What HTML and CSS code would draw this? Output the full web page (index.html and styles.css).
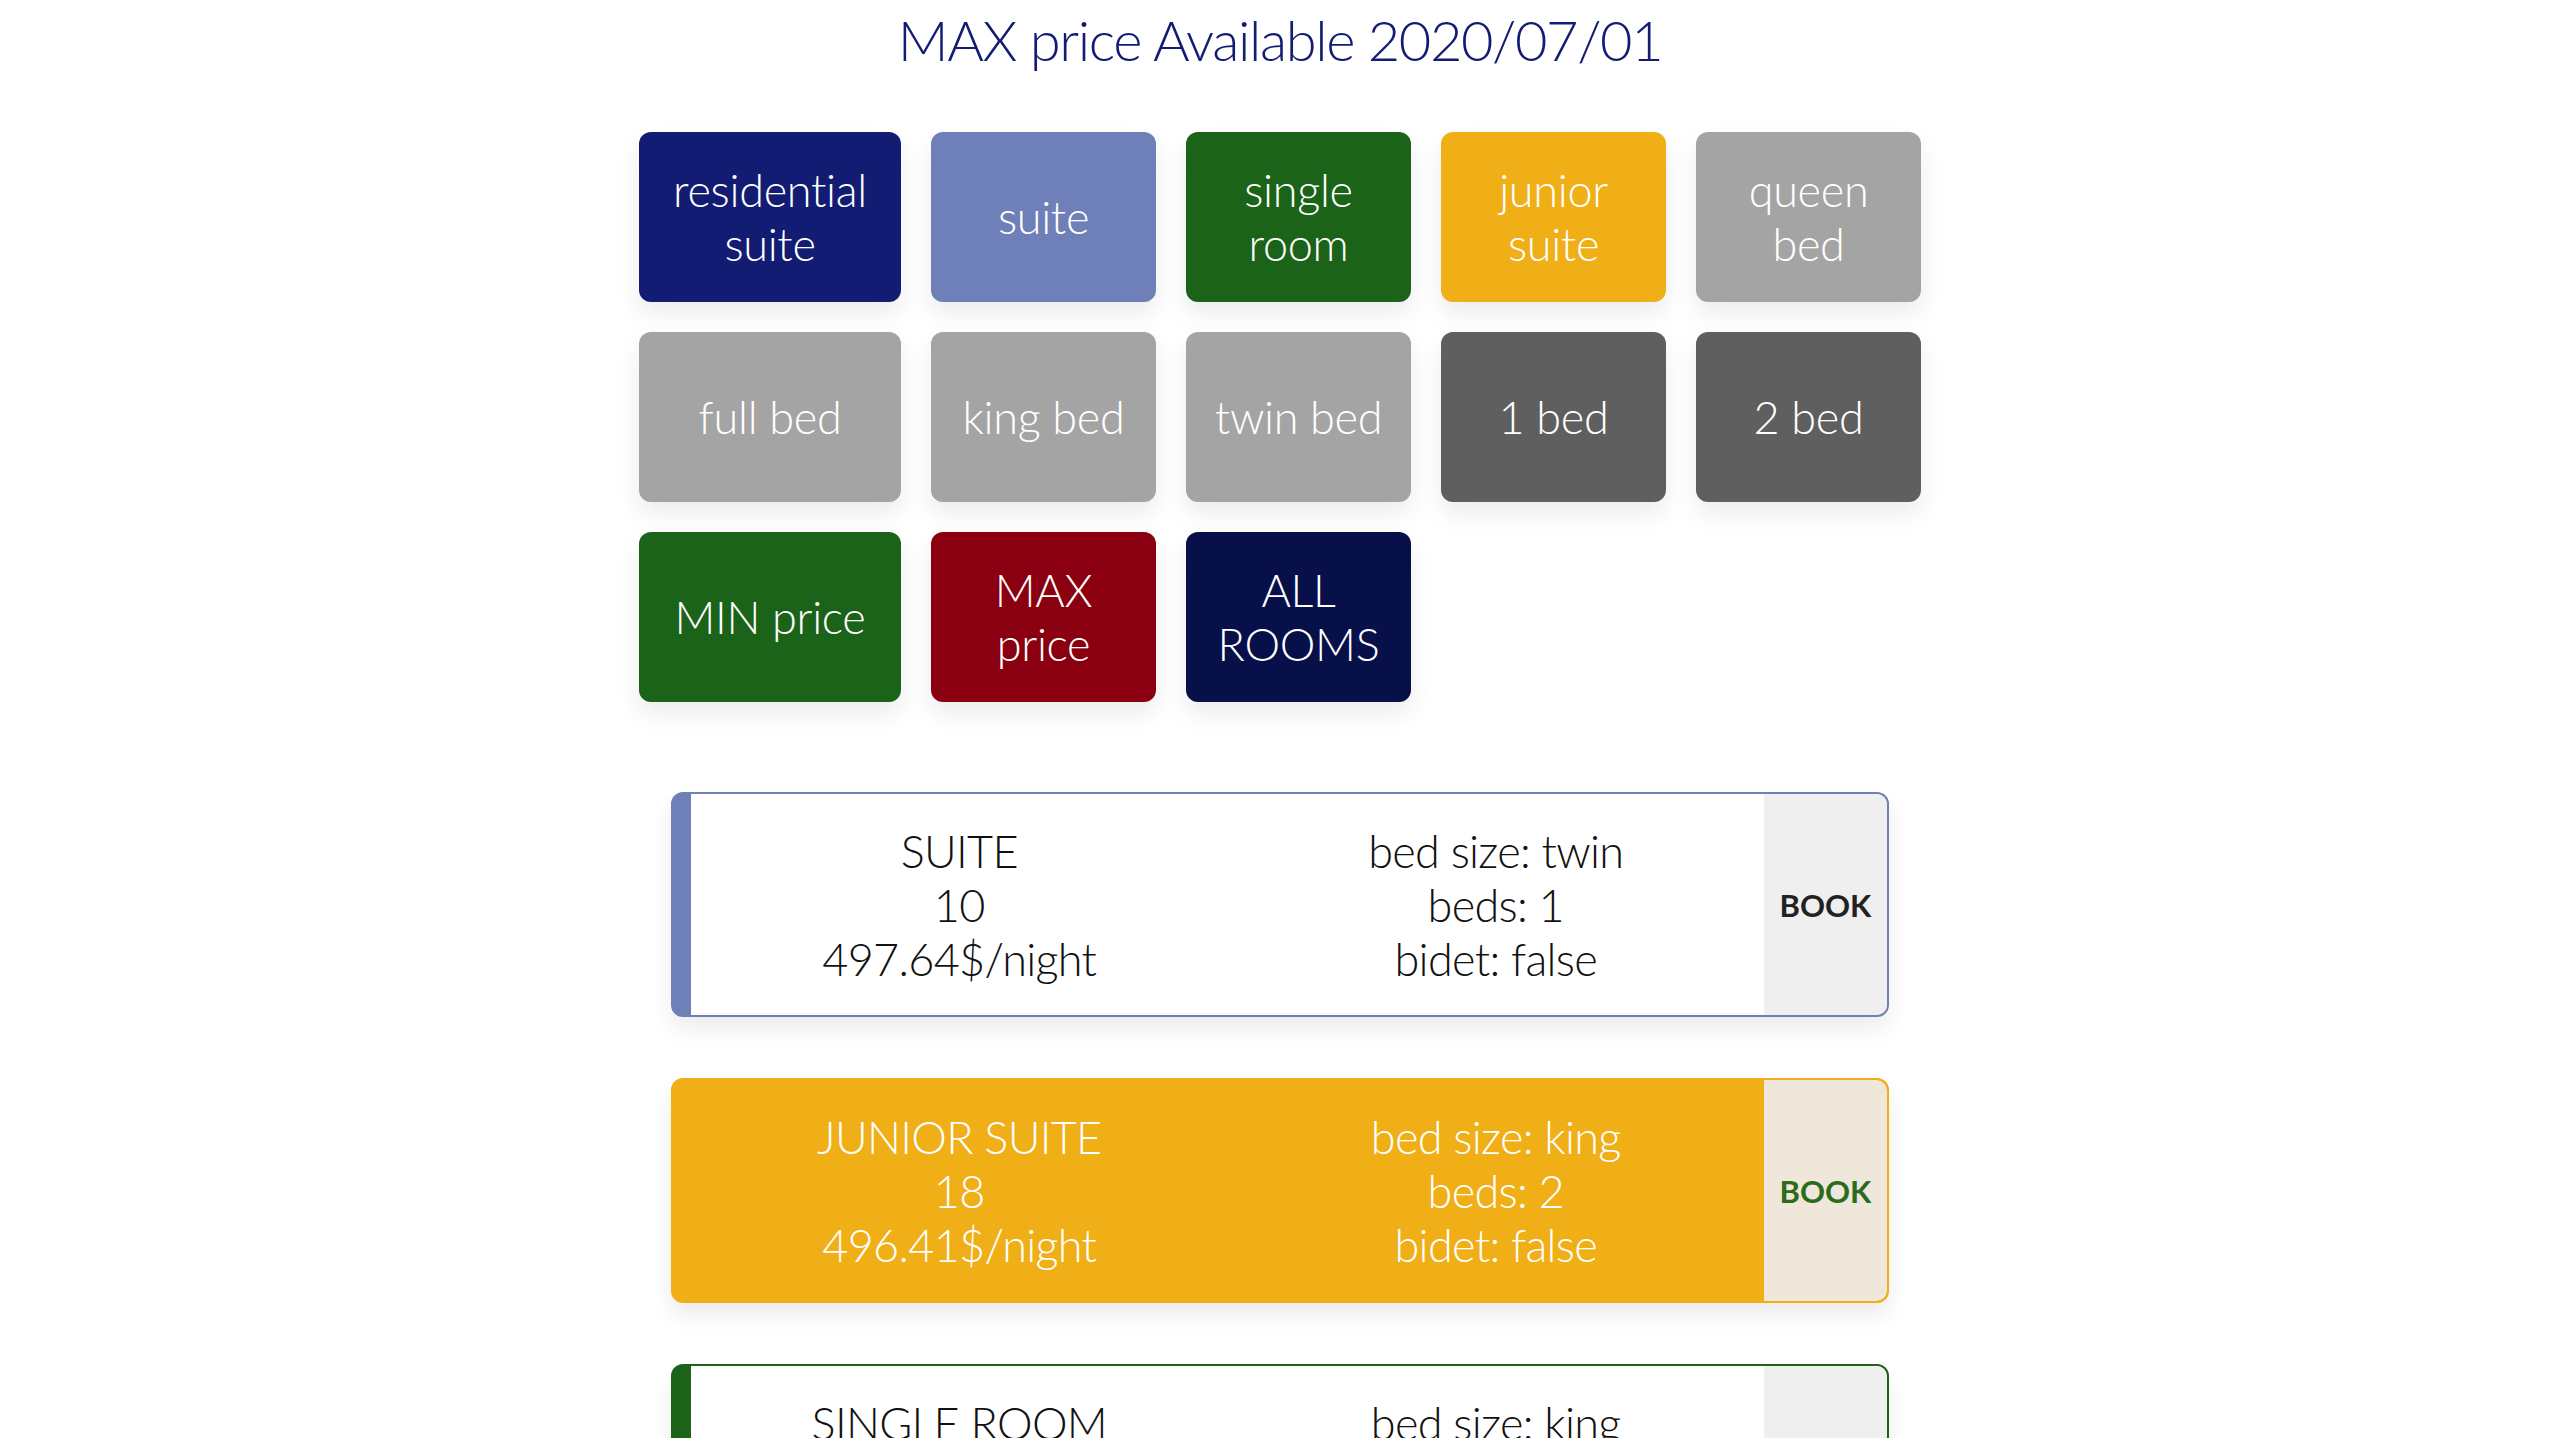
FILE: index.html
```html
<!DOCTYPE html>
<html lang="en">
<head>
<meta charset="utf-8">
<title>MAX price Available</title>
<link rel="stylesheet" href="styles.css">
</head>
<body>
<main class="page">
  <h1 class="title">MAX price Available 2020/07/01</h1>

  <div class="filters">
    <button class="filter c-residential">residential<br>suite</button>
    <button class="filter c-suite">suite</button>
    <button class="filter c-single">single<br>room</button>
    <button class="filter c-junior">junior<br>suite</button>
    <button class="filter c-light">queen<br>bed</button>

    <button class="filter c-light">full bed</button>
    <button class="filter c-light">king bed</button>
    <button class="filter c-light">twin bed</button>
    <button class="filter c-dark">1 bed</button>
    <button class="filter c-dark">2 bed</button>

    <button class="filter c-min">MIN price</button>
    <button class="filter c-max">MAX price</button>
    <button class="filter c-all">ALL<br>ROOMS</button>
  </div>

  <section class="rooms">
    <article class="room room-suite">
      <div class="room-col">
        <div>SUITE</div>
        <div>10</div>
        <div>497.64$/night</div>
      </div>
      <div class="room-col">
        <div>bed size: twin</div>
        <div>beds: 1</div>
        <div>bidet: false</div>
      </div>
      <button class="book">BOOK</button>
    </article>

    <article class="room room-junior">
      <div class="room-col">
        <div>JUNIOR SUITE</div>
        <div>18</div>
        <div>496.41$/night</div>
      </div>
      <div class="room-col">
        <div>bed size: king</div>
        <div>beds: 2</div>
        <div>bidet: false</div>
      </div>
      <button class="book">BOOK</button>
    </article>

    <article class="room room-single">
      <div class="room-col">
        <div>SINGLE ROOM</div>
        <div>4</div>
        <div>495.87$/night</div>
      </div>
      <div class="room-col">
        <div>bed size: king</div>
        <div>beds: 1</div>
        <div>bidet: true</div>
      </div>
      <button class="book">BOOK</button>
    </article>
  </section>
</main>
</body>
</html>
```

FILE: styles.css
```css
html, body {
  margin: 0;
  padding: 0;
  background: #ffffff;
}

body {
  font-family: Lato, "Open Sans", "Liberation Sans", sans-serif;
  font-weight: 300;
}

.page {
  display: flex;
  flex-direction: column;
  align-items: center;
}

.title {
  margin: 0;
  padding-top: 6px;
  font-size: 56px;
  line-height: 67px;
  font-weight: 300;
  letter-spacing: -1.4px;
  color: #121c72;
  text-align: center;
}

.filters {
  margin-top: 59px;
  display: grid;
  grid-template-columns: 262px repeat(4, 225px);
  grid-auto-rows: 170px;
  gap: 30px;
  justify-content: center;
}

.filter {
  border: none;
  margin: 0;
  padding: 0 20px;
  border-radius: 12px;
  font-family: inherit;
  font-weight: 300;
  font-size: 45px;
  line-height: 54px;
  letter-spacing: -0.3px;
  color: #ffffff;
  text-align: center;
  box-shadow: 0 12px 24px rgba(0, 0, 0, 0.08);
  cursor: pointer;
}

.c-residential { background: #121c72; }
.c-suite { background: #6f7fb8; }
.c-single { background: #1b6319; }
.c-junior { background: #f0ae17; }
.c-light { background: #a4a4a4; }
.c-dark { background: #5f5f5f; }
.c-min { background: #1b6319; }
.c-max { background: #8a0010; }
.c-all { background: #08104a; }

.rooms {
  margin-top: 90px;
  display: flex;
  flex-direction: column;
  gap: 61px;
}

.room {
  width: 1218px;
  height: 225px;
  box-sizing: border-box;
  display: flex;
  border: 2px solid;
  border-left-width: 20px;
  border-radius: 12px;
  box-shadow: 0 12px 22px rgba(0, 0, 0, 0.08);
  overflow: hidden;
}

.room-col {
  flex: 1;
  display: flex;
  flex-direction: column;
  justify-content: center;
  align-items: center;
  font-size: 45px;
  line-height: 54px;
  letter-spacing: -0.7px;
}

.book {
  width: 123px;
  flex: none;
  border: none;
  margin: 0;
  padding: 0;
  border-radius: 0 10px 10px 0;
  font-family: inherit;
  font-weight: 700;
  font-size: 31px;
  cursor: pointer;
}

.room-suite {
  border-color: #6f7fb8;
  background: #ffffff;
  color: #111111;
}
.room-suite .book { background: #efefef; color: #222222; }

.room-junior {
  border-color: #f0ae17;
  background: #f0ae17;
  color: #ffffff;
}
.room-junior .book { background: #efe7d9; color: #2b6b1c; }

.room-single {
  border-color: #1b6319;
  background: #ffffff;
  color: #111111;
}
.room-single .book { background: #efefef; color: #222222; }
```
